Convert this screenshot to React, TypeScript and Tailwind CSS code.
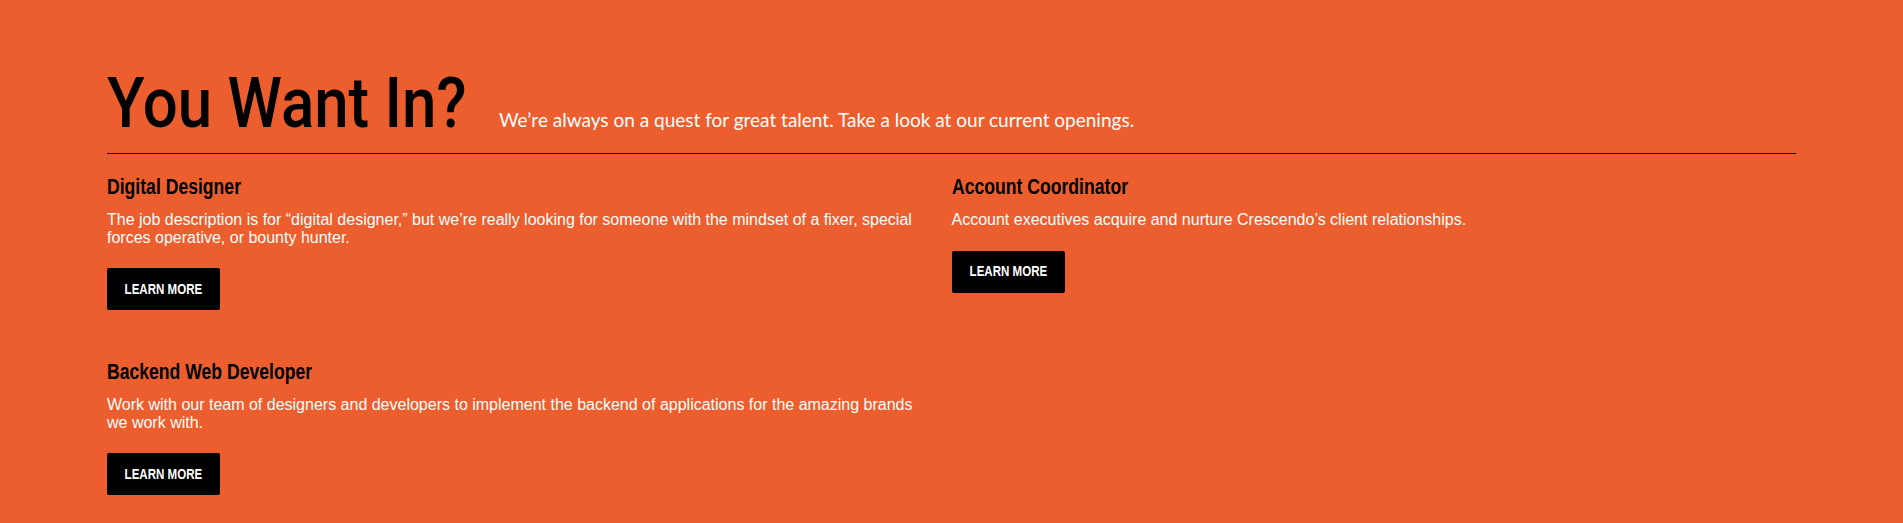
const jobs = [
  {
    title: 'Digital Designer',
    text: 'The job description is for “digital designer,” but we’re really looking for someone with the mindset of a fixer, special forces operative, or bounty hunter.',
  },
  {
    title: 'Account Coordinator',
    text: 'Account executives acquire and nurture Crescendo’s client relationships.',
  },
  {
    title: 'Backend Web Developer',
    text: 'Work with our team of designers and developers to implement the backend of applications for the amazing brands we work with.',
  },
];

// condensed look: no narrow face installed, so squeeze Liberation Sans
function JobCard({ title, text }: { title: string; text: string }) {
  return (
    <div className="pr-5 pb-[49px]">
      <h3 className="font-['Liberation_Sans',Arial,sans-serif] text-[22px] leading-[25px] font-bold text-black">
        <span className="inline-block origin-left scale-x-[0.8] whitespace-nowrap">{title}</span>
      </h3>
      <p className="mt-[12px] font-['Liberation_Sans',Arial,sans-serif] text-[16px] leading-[1.1] text-white">
        {text}
      </p>
      <a
        href="#"
        className="mt-[22px] flex h-[42px] w-[113px] items-center justify-center rounded-[2px] bg-black font-['Liberation_Sans',Arial,sans-serif] text-[15px] font-bold text-white uppercase"
      >
        <span className="inline-block scale-x-[0.77] whitespace-nowrap">Learn More</span>
      </a>
    </div>
  );
}

export default function App() {
  return (
    <section className="min-h-[523px] bg-[#ec5e2d] px-[107px] pt-[67px]">
      <div className="flex items-baseline border-b border-black pb-[15px]">
        <h2 className="w-[392px] shrink-0 font-['Roboto',sans-serif] text-[71px] leading-none font-medium text-black">
          <span className="inline-block origin-left scale-x-[0.87] whitespace-nowrap">You Want In?</span>
        </h2>
        <p className="font-['Lato',sans-serif] text-[19px] text-white">
          We’re always on a quest for great talent. Take a look at our current openings.
        </p>
      </div>
      <div className="grid grid-cols-2 pt-5">
        {jobs.map((job) => (
          <JobCard key={job.title} title={job.title} text={job.text} />
        ))}
      </div>
    </section>
  );
}
